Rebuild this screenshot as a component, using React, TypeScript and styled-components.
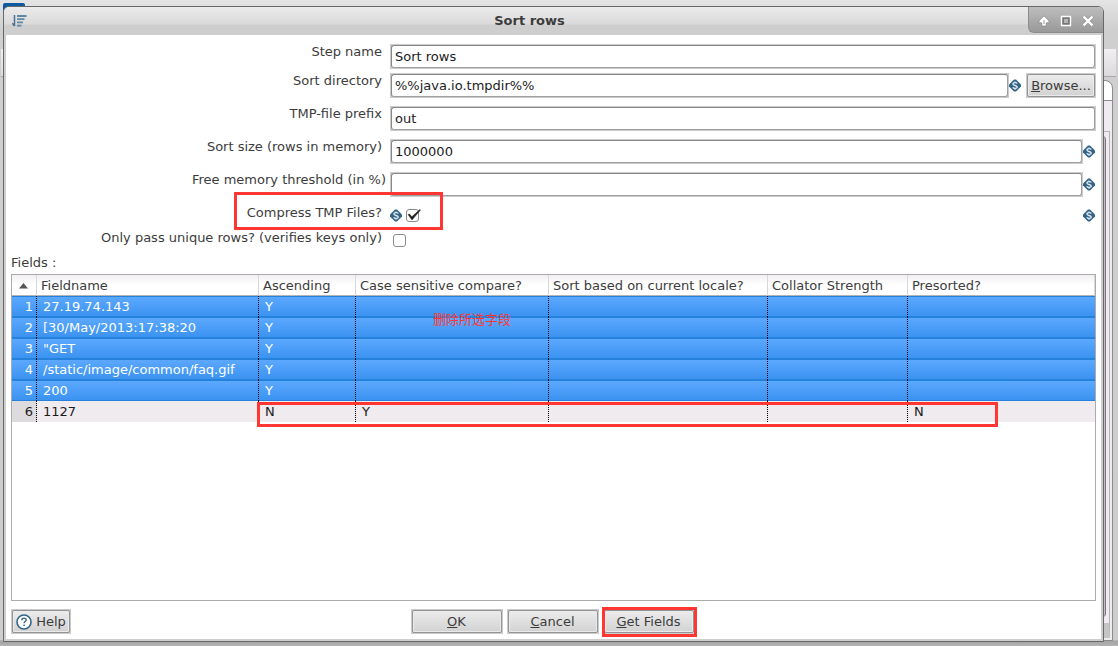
import React from "react";
import styled, { createGlobalStyle, css } from "styled-components";

const GlobalStyle = createGlobalStyle`
  *, *::before, *::after { box-sizing: border-box; }
  body {
    margin: 0;
    font-family: "DejaVu Sans", "Noto Sans CJK SC", sans-serif;
    font-size: 13px;
    line-height: 16px;
    color: #3c3c3c;
  }
`;

const Desktop = styled.div`
  position: relative;
  display: flex;
  min-height: 100vh;
  padding: 6px 14px 4px 3px;
  background: linear-gradient(#e4e4e4, #cfcfcf 30px, #cdcdcd calc(100% - 6px), #a3a3a3 calc(100% - 5px), #b4b4b4);
`;

const MenuHighlight = styled.div`
  position: absolute;
  top: 3px;
  left: 3px;
  width: 22px;
  height: 12px;
  border-radius: 2px 2px 0 0;
  background: #0b5aa2;
`;

const BackToolbar = styled.div`
  position: absolute;
  top: 49px;
  left: 1px;
  right: 2px;
  height: 28px;
  border-bottom: 1px solid #a8a8a8;
  background: linear-gradient(#f2eff2, #dcdadc);
`;

const BackPanel = styled.div`
  position: absolute;
  top: 80px;
  right: 5px;
  bottom: 5px;
  width: 40px;
  border: 1px solid #8d8b8d;
  border-radius: 0 8px 0 0;
  background: linear-gradient(#fff 19px, #8d8b8d 19px, #8d8b8d 20px, #f0ebf0 20px);
`;

const BackScroll = styled.div`
  position: absolute;
  top: 131px;
  right: 8px;
  bottom: 8px;
  width: 30px;
  border: 1px solid #b5b1b5;
  border-bottom: 15px solid #c4c6c4;
`;

const BackThumb = styled.div`
  position: absolute;
  top: 136px;
  right: 12px;
  bottom: 29px;
  width: 12px;
  border-right: 1px solid #777;
  border-radius: 0 4px 4px 0;
  background: #c4c4c4;
`;

const Dialog = styled.main`
  position: relative;
  display: flex;
  flex: 1;
  flex-direction: column;
  min-width: 0;
  border: 1px solid #686868;
  border-radius: 6px 6px 0 0;
  background: #cecece;
`;

const TitleBar = styled.header`
  display: grid;
  grid-template-columns: 27px 1fr 75px;
  height: 28px;
  border-radius: 5px 5px 0 0;
  background: linear-gradient(#ebebeb, #dadada 17px, #cecece 18px);
`;

const TitleIcon = styled.svg`
  margin: 7px 0 0 8px;
`;

const Title = styled.h1`
  margin: 0;
  font-size: 13px;
  line-height: 27px;
  text-align: center;
`;

const WindowButtons = styled.div`
  display: flex;
  height: 26px;
  padding: 0 4px;
  border-left: 1px solid #8c8c8c;
  border-bottom: 1px solid #8c8c8c;
  border-radius: 0 5px 0 6px;
  background: linear-gradient(#bdbdbd, #999);
`;

const WindowButton = styled.button`
  flex: 1;
  padding: 2px 0 0;
  border: 0;
  background: none;
  line-height: 0;
`;

const Body = styled.form`
  display: flex;
  flex: 1;
  flex-direction: column;
  margin: 0 2px 2px;
  padding: 9px 5px 5px;
  background: #fff;
`;

const Row = styled.div<{ $height: number }>`
  position: relative;
  display: grid;
  grid-template-columns: 379px 1fr;
  height: ${(p) => p.$height}px;
`;

const Label = styled.label<{ $wide?: boolean }>`
  padding-right: ${(p) => (p.$wide ? 4 : 8)}px;
  text-align: right;
`;

const Control = styled.div<{ $height?: number }>`
  display: flex;
  align-items: center;
  height: ${(p) => p.$height ?? 25}px;
`;

const Frame = styled.span`
  display: flex;
  flex: 1;
  min-width: 0;
  height: 25px;
  padding: 1px;
  background: #cbcbcb;
`;

const TextInput = styled.input`
  flex: 1;
  min-width: 0;
  padding: 0 3px;
  border: 1px solid #888;
  border-right-color: #a0a0a0;
  border-bottom-color: #a0a0a0;
  border-radius: 3px;
  background: #fff;
  color: #1c1c1c;
  font: inherit;
`;

const Button = styled.button<{ $width: number }>`
  display: flex;
  width: ${(p) => p.$width}px;
  height: 25px;
  padding: 1px;
  border: 0;
  background: #cbcbcb;
  color: #3c3c3c;
  font: inherit;
  white-space: nowrap;
`;

const Face = styled.span`
  display: flex;
  flex: 1;
  align-items: center;
  justify-content: center;
  gap: 4px;
  border: 1px solid #949494;
  border-radius: 2px;
  background: linear-gradient(#ececec, #d2d2d2);
  box-shadow: inset 0 0 0 1px #ebebeb;
`;

const BrowseSlot = styled.span`
  margin-left: 4px;
`;

const CheckRight = styled.span`
  margin-left: auto;
  line-height: 0;
`;

const CheckBox = styled.span`
  position: relative;
  display: block;
  width: 13px;
  height: 13px;
  margin: 0 3px;
`;

const CheckInput = styled.input`
  display: block;
  width: 13px;
  height: 13px;
  margin: 0;
  border: 1px solid #8c8c8c;
  border-radius: 3px;
  background: #fff;
  appearance: none;
`;

const CheckMark = styled.svg`
  position: absolute;
  top: 0;
  left: 1px;
  pointer-events: none;
`;

const Icon = styled.svg`
  display: block;
  flex: none;
`;

const VariableMark = styled(Icon)`
  margin-right: 1px;
`;

const TableLabel = styled.div`
  padding-bottom: 3px;
`;

const TableFrame = styled.div`
  position: relative;
  flex: 1;
  border: 1px solid #ababab;
`;

const Table = styled.table`
  width: 100%;
  border-collapse: separate;
  border-spacing: 0;
  table-layout: fixed;
`;

const HeadCell = styled.th`
  height: 21px;
  padding: 2px 4px 0;
  border-right: 1px solid #d9d6d9;
  border-bottom: 1px solid #b3b3b3;
  background: linear-gradient(#f2eff2, #fff 10px);
  font-weight: normal;
  text-align: left;
  white-space: nowrap;
`;

const BodyRow = styled.tr<{ $selected: boolean }>`
  color: ${(p) => (p.$selected ? "#fff" : "#1c1c1c")};
  background: ${(p) =>
    p.$selected
      ? "linear-gradient(#2482dc 1px, #5ca8ff 1px, #3b93f0 20px, #2482dc 20px)"
      : "#efebef"};
`;

const Cell = styled.td`
  height: 21px;
  padding: 0 6px;
  background: repeating-linear-gradient(#000 0 1px, transparent 1px 2px) right / 1px 100% no-repeat;
  white-space: nowrap;

  &:last-child { background: none; }
`;

const NumberCell = styled(Cell)<{ $selected: boolean }>`
  padding: 0 4px 0 0;
  background-color: ${(p) => (p.$selected ? "transparent" : "#dedbde")};
  text-align: right;
`;

const Footer = styled.footer`
  display: grid;
  grid-template-columns: 1fr auto 1fr;
  align-items: center;
  padding-top: 8px;
`;

const Actions = styled.div`
  display: flex;
  gap: 4px;
  padding-right: 2px;
`;

const ActionSlot = styled.div`
  position: relative;
`;

const mark = css`
  position: absolute;
  border: 3px solid #ff3632;
  pointer-events: none;
`;

const CompressMark = styled.div`
  ${mark}
  top: -13px;
  left: 223px;
  width: 209px;
  height: 38px;
`;

const RowMark = styled.div`
  ${mark}
  top: 127px;
  left: 245px;
  width: 741px;
  height: 25px;
`;

const ButtonMark = styled.div`
  ${mark}
  inset: -2px -2px -3px -1px;
`;

const Note = styled.div`
  position: absolute;
  top: 36px;
  left: 421px;
  color: #ff3632;
  font-family: "Noto Sans CJK SC", sans-serif;
`;

const VariableIcon = () => (
  <VariableMark width="12" height="13" viewBox="0 0 12 13" aria-hidden="true">
    <path d="M5 .5h2l5 5v2l-5 5H5l-5-5v-2z" fill="#336486" />
    <path d="M8.300 4.500C7.500 3.200 3.900 3.200 3.900 5c0 1.800 4.400 1.200 4.400 3.100 0 1.800-3.700 1.700-4.600.3M6 2.500v1.300M6 9.400v1.300" fill="none" stroke="#e6eef4" strokeWidth="1.300" />
  </VariableMark>
);

type FieldProps = {
  id: string;
  label: string;
  value: string;
  height?: number;
  wide?: boolean;
  variable?: boolean;
  children?: React.ReactNode;
};

const Field = ({ id, label, value, height = 33, wide, variable, children }: FieldProps) => (
  <Row $height={height}>
    <Label htmlFor={id} $wide={wide}>{label}</Label>
    <Control>
      <Frame><TextInput id={id} defaultValue={value} /></Frame>
      {variable && <VariableIcon />}
      {children}
    </Control>
  </Row>
);

const columns = [
  { name: "Fieldname", width: 222 },
  { name: "Ascending", width: 97 },
  { name: "Case sensitive compare?", width: 193 },
  { name: "Sort based on current locale?", width: 219 },
  { name: "Collator Strength", width: 140 },
  { name: "Presorted?", width: undefined },
];

const rows = [
  ["27.19.74.143", "Y", "", "", "", ""],
  ["[30/May/2013:17:38:20", "Y", "", "", "", ""],
  ["\"GET", "Y", "", "", "", ""],
  ["/static/image/common/faq.gif", "Y", "", "", "", ""],
  ["200", "Y", "", "", "", ""],
  ["1127", "N", "Y", "", "", "N"],
];

export default function App() {
  return (
    <>
      <GlobalStyle />
      <Desktop>
        <BackToolbar />
        <BackPanel />
        <BackScroll />
        <BackThumb />
        <MenuHighlight />
        <Dialog>
          <TitleBar>
            <TitleIcon width="16" height="14" viewBox="0 0 16 14" aria-hidden="true">
              <path d="M2.500 1v11M.3 9.300l2.200 2.700" fill="none" stroke="#4c7090" strokeWidth="1.500" />
              <path d="M5 2h9.500M5 5.200h7.500M5 8.400h6M5 11.600h4.500" stroke="#6088a5" strokeWidth="1.800" />
            </TitleIcon>
            <Title>Sort rows</Title>
            <WindowButtons>
              <WindowButton type="button" aria-label="Shade">
                <svg width="12" height="12" viewBox="0 0 12 12">
                  <path d="M6 .8L11 6v1.800H8.200v3.200H3.800V7.800H1V6z" fill="#fff" stroke="#777" strokeWidth=".6" />
                  <path d="M6 5v4" stroke="#999" />
                </svg>
              </WindowButton>
              <WindowButton type="button" aria-label="Maximize">
                <svg width="12" height="12" viewBox="0 0 12 12">
                  <path d="M1.500 1.500h9v9h-9z" fill="#777" stroke="#fff" strokeWidth="1.400" />
                  <path d="M4 4h4v4H4z" fill="#b5b5b5" />
                </svg>
              </WindowButton>
              <WindowButton type="button" aria-label="Close">
                <svg width="12" height="12" viewBox="0 0 12 12">
                  <path d="M1.500 1.500l9 9M10.500 1.500l-9 9" stroke="#777" strokeWidth="3.600" />
                  <path d="M1.500 1.500l9 9M10.500 1.500l-9 9" stroke="#fff" strokeWidth="2.500" />
                </svg>
              </WindowButton>
            </WindowButtons>
          </TitleBar>
          <Body onSubmit={(e) => e.preventDefault()}>
            <Field id="step" label="Step name" value="Sort rows" height={29} />
            <Field id="dir" label="Sort directory" value="%%java.io.tmpdir%%" variable>
              <BrowseSlot><Button type="button" $width={70}><Face><span><u>B</u>rowse...</span></Face></Button></BrowseSlot>
            </Field>
            <Field id="prefix" label="TMP-file prefix" value="out" />
            <Field id="size" label="Sort size (rows in memory)" value="1000000" variable />
            <Field id="memory" label="Free memory threshold (in %)" value="" wide variable />
            <Row $height={25}>
              <Label htmlFor="compress">Compress TMP Files?</Label>
              <Control $height={21}>
                <VariableIcon />
                <CheckBox>
                  <CheckInput id="compress" type="checkbox" defaultChecked />
                  <CheckMark width="14" height="12" viewBox="0 0 14 12">
                    <path d="M1 5.500L2.500 5l2.300 2.800L12.800.5l.7.5L5 11z" fill="#222" stroke="#222" strokeWidth=".5" />
                  </CheckMark>
                </CheckBox>
                <CheckRight><VariableIcon /></CheckRight>
              </Control>
              <CompressMark />
            </Row>
            <Row $height={25}>
              <Label htmlFor="unique">Only pass unique rows? (verifies keys only)</Label>
              <Control $height={21}>
                <CheckBox><CheckInput id="unique" type="checkbox" /></CheckBox>
              </Control>
            </Row>
            <TableLabel>Fields :</TableLabel>
            <TableFrame>
              <Table>
                <colgroup>
                  <col style={{ width: 25 }} />
                  {columns.map((c) => <col key={c.name} style={{ width: c.width }} />)}
                </colgroup>
                <thead>
                  <tr>
                    <HeadCell scope="col" aria-label="Row number">
                      <Icon width="16" height="6" viewBox="0 0 16 6"><path d="M7.500 0L12 5.500H3z" fill="#555" /></Icon>
                    </HeadCell>
                    {columns.map((c) => <HeadCell key={c.name} scope="col">{c.name}</HeadCell>)}
                  </tr>
                </thead>
                <tbody>
                  {rows.map((r, i) => (
                    <BodyRow key={r[0]} $selected={i < 5}>
                      <NumberCell $selected={i < 5}>{i + 1}</NumberCell>
                      {r.map((v, j) => <Cell key={j}>{v}</Cell>)}
                    </BodyRow>
                  ))}
                </tbody>
              </Table>
              <Note>删除所选字段</Note>
              <RowMark />
            </TableFrame>
            <Footer>
              <Button type="button" $width={60}>
                <Face>
                  <Icon width="16" height="16" viewBox="0 0 16 16" aria-hidden="true">
                    <circle cx="8" cy="8" r="7" fill="#fff" stroke="#336486" strokeWidth="1.600" />
                    <path d="M5.800 6.300c0-3 4.400-2.700 4.400-.3 0 1.500-2.100 1.500-2.100 3.200M8.100 10.500v1.500" fill="none" stroke="#336486" strokeWidth="1.400" />
                  </Icon>
                  Help
                </Face>
              </Button>
              <Actions>
                <Button type="submit" $width={92}><Face><span><u>O</u>K</span></Face></Button>
                <Button type="button" $width={92}><Face><span><u>C</u>ancel</span></Face></Button>
                <ActionSlot>
                  <Button type="button" $width={92}><Face><span><u>G</u>et Fields</span></Face></Button>
                  <ButtonMark />
                </ActionSlot>
              </Actions>
            </Footer>
          </Body>
        </Dialog>
      </Desktop>
    </>
  );
}
